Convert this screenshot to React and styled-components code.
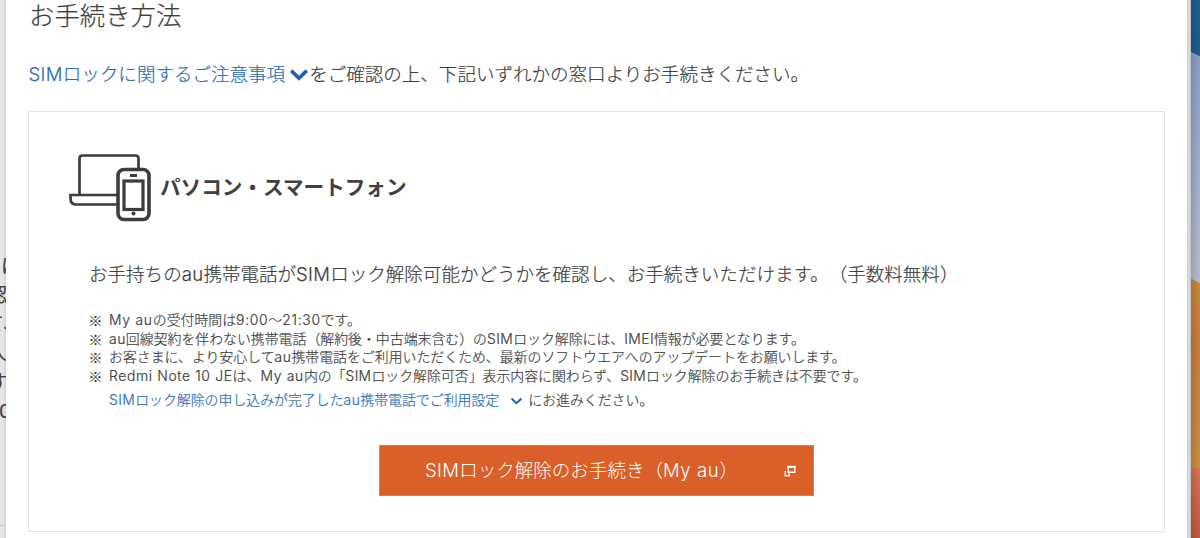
import React from 'react';
import styled, { createGlobalStyle } from 'styled-components';

const GlobalStyle = createGlobalStyle`
  * {
    box-sizing: border-box;
  }

  body {
    margin: 0;
    background: #ffffff;
    color: #404040;
    font-family: Inter, 'Noto Sans CJK JP', sans-serif;
    font-weight: 300;
    text-spacing-trim: space-all;
    -webkit-text-stroke: 0.2px currentColor;
    overflow: hidden;
  }
`;

const Page = styled.div`
  display: flex;
  width: 1200px;
  height: 538px;
  overflow: hidden;
`;

const Backdrop = styled.aside`
  flex: 0 0 6px;
  display: flex;
  flex-direction: column;
  padding-top: 252px;
  overflow: hidden;
  background: linear-gradient(90deg, #e6e6e6 0 3px, #d2d2d2);
`;

const BackdropLine = styled.div`
  flex: 0 0 29px;
  margin-left: ${({ $shift }) => $shift}px;
  font-size: 19px;
  font-weight: 400;
  line-height: 29px;
  white-space: nowrap;
`;

const BackdropRule = styled.div`
  width: 4px;
  height: 1px;
  margin-top: 99px;
  background: #c4c4c4;
`;

const Main = styled.main`
  flex: 1;
  display: flex;
  flex-direction: column;
  padding: 0 22px;
  background: #ffffff;
  white-space: nowrap;
`;

const Title = styled.h2`
  height: 32px;
  margin: 0 0 0 1px;
  font-size: 25.4px;
  font-weight: 300;
  line-height: 32px;
`;

const Lead = styled.p`
  display: flex;
  height: 28px;
  margin: 28px 0 24px 0.6px;
  font-size: 18.55px;
  line-height: 28px;
`;

const Latin = styled.span`
  letter-spacing: ${({ $spacing }) => $spacing ?? 0.3}px;
`;

const Link = styled.a`
  color: #2b6cb5;
  text-decoration: none;
`;

const Card = styled.section`
  display: flex;
  flex-direction: column;
  height: 421px;
  margin-top: -1px;
  border: 1px solid #e4e4e4;
`;

const CardHeader = styled.div`
  display: flex;
  align-items: center;
  height: 72px;
  margin: 38px 0 0 40px;
`;

const CardTitle = styled.h3`
  margin: 3px 0 0 7px;
  font-size: 20.6px;
  font-weight: 700;
  line-height: 30px;
  -webkit-text-stroke: 0;
`;

const CardBody = styled.div`
  padding: 38px 0 0 60px;
`;

const Description = styled.p`
  margin: 0;
  font-size: 18.55px;
  line-height: 28px;
`;

const Notes = styled.ul`
  margin: 23px 0 0;
  padding: 0;
  list-style: none;
  font-size: 13.9px;
  line-height: 18.6px;
`;

const Note = styled.li`
  display: flex;
`;

const Mark = styled.span`
  flex: 0 0 20.4px;
  margin-left: -0.4px;
  font-family: 'Noto Sans CJK JP', sans-serif;
`;

const NextStep = styled.p`
  display: flex;
  margin: 5px 0 0 20px;
  font-size: 13.9px;
  line-height: 20px;
`;

const SmallChevron = styled.svg`
  margin: 7px 5px 0 11px;
`;

const LargeChevron = styled.svg`
  margin: 8px 0 0 4px;
`;

const Button = styled.button`
  display: flex;
  align-items: center;
  justify-content: space-between;
  width: 435px;
  height: 51px;
  margin: 35px 0 0 350px;
  padding: 0 17px 5px 45px;
  border: 1px solid #e27a4c;
  border-radius: 0;
  background: #da5f29;
  color: #ffffff;
  font: inherit;
  font-size: 18.55px;
  -webkit-text-stroke: 0;
`;

const ButtonIcon = styled.svg`
  margin-top: 6px;
`;

const ScrollEdge = styled.div`
  flex: 0 0 4px;
  background: linear-gradient(90deg, #cfcfcf 0 1px, #dadada 1px 3px, #a9abad);
`;

const Wallpaper = styled.div`
  flex: 0 0 9px;
  background:
    linear-gradient(90deg, rgba(0, 0, 0, 0.14), transparent),
    linear-gradient(
      207deg,
      #205f94 0,
      #1f5b8d 50px,
      #8c9fc8 50.5px,
      #a3b1cd 160px,
      #b9bdcb 251px,
      #b9bdcb 252px,
      transparent 252.5px
    ),
    linear-gradient(#c98743 0 280px, #c57f3c 340px, #c89042 468px, #d57551 468px, #c05b3c 538px);
`;

const backdropLines = [
  { text: 'に', shift: 1 },
  { text: '認', shift: -12 },
  { text: 'て、', shift: -15 },
  { text: '人', shift: -12 },
  { text: 'す', shift: -11 },
  { text: '0', shift: -1 }
];

function DevicesIcon() {
  return (
    <svg width="84" height="72" viewBox="0 0 84 72" fill="none" stroke="#3d3b3c" strokeWidth="2.7">
      <path d="M10.5 45V8.5q0-3 3-3h53q3 0 3 3V19" />
      <path d="M48 45H1.5v4q0 5.5 6 5.5H48" />
      <rect x="49" y="19.5" width="31" height="50" rx="6" strokeWidth="3.6" />
      <rect x="55" y="31" width="19" height="28.5" strokeWidth="3.2" />
      <path d="M61 25.5h7" strokeWidth="3" />
      <circle cx="64.5" cy="63.5" r="2" fill="#3d3b3c" stroke="none" />
    </svg>
  );
}

function WindowIcon() {
  return (
    <ButtonIcon width="12" height="12" viewBox="0 0 12 12" fill="none" stroke="#fff" strokeWidth="1.4">
      <path d="M4.2 1.7h6.6v5.6H4.2z" />
      <path d="M3.5 1.8h8" strokeWidth="2" />
      <path d="M1.3 6v4.8h3.9V8.3" />
    </ButtonIcon>
  );
}

function App() {
  return (
    <Page>
      <GlobalStyle />
      <Backdrop>
        {backdropLines.map(({ text, shift }) => (
          <BackdropLine key={text} $shift={shift}>
            {text}
          </BackdropLine>
        ))}
        <BackdropRule />
      </Backdrop>
      <Main>
        <Title>お手続き方法</Title>
        <Lead>
          <Link>
            <Latin>SIM</Latin>ロックに関するご注意事項
          </Link>
          <LargeChevron width="20" height="14" viewBox="0 0 20 14" fill="none">
            <path d="M2.2 2.6 10 10.2 17.8 2.6" stroke="#2362ac" strokeWidth="3.6" />
          </LargeChevron>
          <span>をご確認の上、下記いずれかの窓口よりお手続きください。</span>
        </Lead>
        <Card>
          <CardHeader>
            <DevicesIcon />
            <CardTitle>パソコン・スマートフォン</CardTitle>
          </CardHeader>
          <CardBody>
            <Description>
              お手持ちの<Latin>au</Latin>携帯電話が<Latin>SIM</Latin>
              ロック解除可能かどうかを確認し、お手続きいただけます。（手数料無料）
            </Description>
            <Notes>
              <Note>
                <Mark>※</Mark>
                <span>
                  <Latin $spacing={0.75}>My au</Latin>の受付時間は<Latin $spacing={0.7}>9:00</Latin>～
                  <Latin $spacing={0.7}>21:30</Latin>です。
                </span>
              </Note>
              <Note>
                <Mark>※</Mark>
                <span>
                  <Latin $spacing={0.5}>au</Latin>回線契約を伴わない携帯電話（解約後・中古端末含む）の
                  <Latin $spacing={0.4}>SIM</Latin>
                  ロック解除には、<Latin $spacing={0.4}>IMEI</Latin>情報が必要となります。
                </span>
              </Note>
              <Note>
                <Mark>※</Mark>
                <span>
                  お客さまに、より安心して<Latin $spacing={0.5}>au</Latin>
                  携帯電話をご利用いただくため、最新のソフトウエアへのアップデートをお願いします。
                </span>
              </Note>
              <Note>
                <Mark>※</Mark>
                <span>
                  <Latin $spacing={0.65}>Redmi Note 10 JE</Latin>は、<Latin $spacing={0.7}>My au</Latin>内の「
                  <Latin>SIM</Latin>
                  ロック解除可否」表示内容に関わらず、<Latin>SIM</Latin>ロック解除のお手続きは不要です。
                </span>
              </Note>
            </Notes>
            <NextStep>
              <Link>
                <Latin $spacing={0.4}>SIM</Latin>ロック解除の申し込みが完了した<Latin $spacing={0.5}>au</Latin>
                携帯電話でご利用設定
              </Link>
              <SmallChevron width="13" height="9" viewBox="0 0 13 9" fill="none">
                <path d="M1.5 1.5 6.5 6.2 11.5 1.5" stroke="#2362ac" strokeWidth="2" />
              </SmallChevron>
              <span>にお進みください。</span>
            </NextStep>
          </CardBody>
          <Button>
            <span>
              <Latin>SIM</Latin>ロック解除のお手続き（<Latin $spacing={0.6}>My au</Latin>）
            </span>
            <WindowIcon />
          </Button>
        </Card>
      </Main>
      <ScrollEdge />
      <Wallpaper />
    </Page>
  );
}

export default App;
